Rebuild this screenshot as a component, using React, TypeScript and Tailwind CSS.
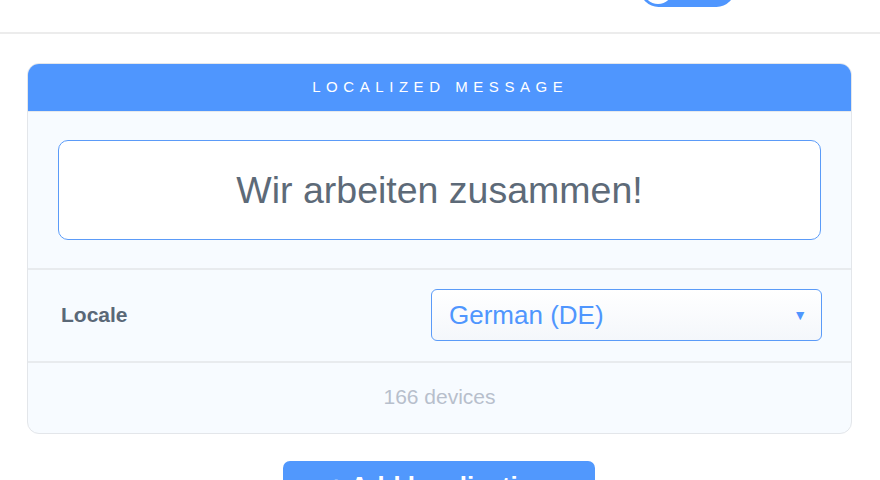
import React from "react";

export default function App() {
  return (
    <div
      className="w-[880px] h-[480px] overflow-hidden bg-white relative"
      style={{ fontFamily: '"Liberation Sans", Arial, sans-serif' }}
    >
      {/* top bar */}
      <div className="h-[34px] border-b-2 border-[#ececec] flex justify-end pr-[145px]">
        <div className="-mt-[30px] w-[95px] h-[37px] rounded-full bg-[#4f96fe] flex items-center pl-[3px]">
          <div className="w-[30px] h-[30px] rounded-full bg-white" />
        </div>
      </div>

      {/* card */}
      <div className="ml-[27px] mt-[29px] w-[825px] rounded-[12px] border border-[#e3e6ea] overflow-hidden bg-[#f7fbff]">
        <div className="h-[47px] bg-[#4f96fe] flex items-center justify-center">
          <span className="text-white text-[15px] tracking-[0.37em] pl-[0.1em]">LOCALIZED MESSAGE</span>
        </div>
        <div className="px-[30px] pt-[28px] pb-[28px] border-t border-[#e6e9ec]">
          <div className="h-[100px] rounded-[10px] border-[1.5px] border-[#5b9bf8] bg-white flex items-center justify-center">
            <span className="text-[#5d6a78] text-[37.5px]">Wir arbeiten zusammen!</span>
          </div>
        </div>
        <div className="border-t-2 border-[#e8ebee] flex items-center justify-between pl-[33px] pr-[29px] pt-[19px] pb-[20px]">
          <span className="text-[#5a6877] text-[21px] font-bold">Locale</span>
          <div className="w-[391px] h-[52px] rounded-[6px] border-[1.5px] border-[#5b9bf8] bg-gradient-to-b from-white to-[#f4f7fb] flex items-center justify-between pl-[17px] pr-[14px]">
            <span className="text-[#4f96fe] text-[26px]">German (DE)</span>
            <span className="text-[#4f96fe] text-[14px]">▼</span>
          </div>
        </div>
        <div className="border-t-2 border-[#e8ebee] h-[72px] flex items-center justify-center">
          <span className="text-[#b7bfcc] text-[21px] -mt-[3px]">166 devices</span>
        </div>
      </div>

      {/* add button */}
      <div className="flex justify-center mt-[27px]">
        <div className="ml-[-2px] w-[312px] h-[52px] rounded-[7px] bg-[#5198fd] flex justify-center pt-[10px]">
          <span className="text-white text-[26px] font-bold leading-[30px]">+ Add localization</span>
        </div>
      </div>
    </div>
  );
}
